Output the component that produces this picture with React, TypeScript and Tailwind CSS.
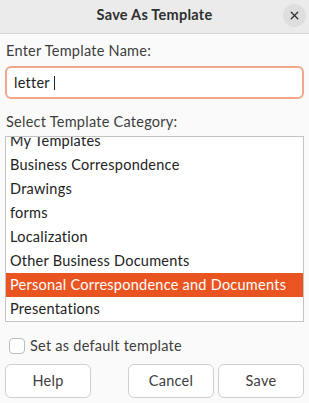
import { X } from "lucide-react"

const CATEGORIES = [
  "My Templates",
  "Business Correspondence",
  "Drawings",
  "forms",
  "Localization",
  "Other Business Documents",
  "Personal Correspondence and Documents",
  "Presentations",
]

const SELECTED = "Personal Correspondence and Documents"

export default function App() {
  return (
    <div
      className="w-[309px] h-[403px] bg-[#fafafa] text-[#3d3d3d] text-[14.5px] tracking-[0.25px] overflow-hidden"
      style={{ fontFamily: '"Lato", "Noto Sans", sans-serif' }}
    >
      {/* Title bar */}
      <div className="h-[34px] bg-[#ebebeb] border-b border-[#d6d6d6] flex items-center justify-center relative">
        <span className="font-bold text-[#2f2f2f] leading-none pb-[2px]">Save As Template</span>
        <button className="absolute right-[3px] top-[4px] w-[23px] h-[23px] rounded-full bg-[#dedede] flex items-center justify-center">
          <X className="w-[13px] h-[13px] text-[#2f2f2f]" strokeWidth={2.4} />
        </button>
      </div>

      <div className="px-[5px]">
        {/* Name */}
        <div className="mt-[6px] h-[22px] leading-[22px] pl-[1px]">Enter Template Name:</div>
        <div className="mt-[4px] h-[33px] rounded-[6px] border-2 border-[#f2a78b] bg-white flex items-center pl-[7px]">
          <span className="text-[#222]">letter</span>
          <span className="ml-[4px] w-[1px] h-[14px] bg-[#222]" />
        </div>

        {/* Category */}
        <div className="mt-[12px] h-[22px] leading-[22px] pl-[1px]">Select Template Category:</div>
        <div className="mt-[3px] h-[186px] border border-[#c4c4c4] bg-white overflow-hidden">
          <div className="-mt-[8px]">
            {CATEGORIES.map((c) => (
              <div
                key={c}
                className={`h-[24px] leading-[24px] pl-[4px] whitespace-nowrap ${
                  c === SELECTED ? "bg-[#e95420] text-white" : "text-[#222]"
                }`}
              >
                {c}
              </div>
            ))}
          </div>
        </div>

        {/* Default checkbox */}
        <div className="mt-[15px] h-[17px] flex items-center gap-[5px] pl-[4px]">
          <span className="w-[16px] h-[16px] rounded-[4px] border border-[#bcbcbc] bg-white" />
          <span>Set as default template</span>
        </div>

        {/* Buttons */}
        <div className="mt-[10px] flex gap-[4px]">
          <button className="w-[86px] h-[34px] rounded-[6px] border border-[#cfcfcf] bg-white text-[#3d3d3d]">
            Help
          </button>
          <div className="flex-1" />
          <button className="w-[86px] h-[34px] rounded-[6px] border border-[#cfcfcf] bg-white text-[#3d3d3d]">
            Cancel
          </button>
          <button className="w-[86px] h-[34px] rounded-[6px] border border-[#cfcfcf] bg-white text-[#3d3d3d]">
            Save
          </button>
        </div>
      </div>
    </div>
  )
}
